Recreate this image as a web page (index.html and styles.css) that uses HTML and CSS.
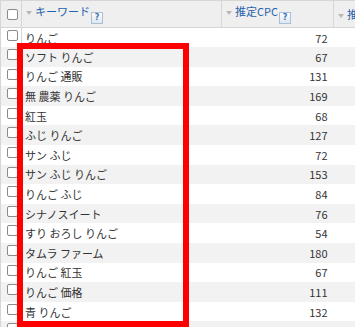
FILE: index.html
```html
<!DOCTYPE html>
<html lang="ja">
<head>
<meta charset="utf-8">
<link rel="stylesheet" href="styles.css">
</head>
<body>
<div class="frame">
  <table class="grid">
    <colgroup>
      <col class="c-chk"><col class="c-kw"><col class="c-cpc"><col class="c-next">
    </colgroup>
    <thead>
      <tr>
        <th class="chk"><span class="box"></span></th>
        <th><span class="tri"></span><span class="hd">キーワード</span><span class="help">?</span></th>
        <th><span class="tri"></span><span class="hd">推定CPC</span><span class="help">?</span></th>
        <th><span class="tri"></span><span class="hd">推定クリック数</span></th>
      </tr>
    </thead>
    <tbody>
      <tr><td class="chk"><span class="box"></span></td><td class="kw">りんご</td><td class="num">72</td><td></td></tr>
      <tr><td class="chk"><span class="box"></span></td><td class="kw">ソフト りんご</td><td class="num">67</td><td></td></tr>
      <tr><td class="chk"><span class="box"></span></td><td class="kw">りんご 通販</td><td class="num">131</td><td></td></tr>
      <tr><td class="chk"><span class="box"></span></td><td class="kw">無 農薬 りんご</td><td class="num">169</td><td></td></tr>
      <tr><td class="chk"><span class="box"></span></td><td class="kw">紅玉</td><td class="num">68</td><td></td></tr>
      <tr><td class="chk"><span class="box"></span></td><td class="kw">ふじ りんご</td><td class="num">127</td><td></td></tr>
      <tr><td class="chk"><span class="box"></span></td><td class="kw">サン ふじ</td><td class="num">72</td><td></td></tr>
      <tr><td class="chk"><span class="box"></span></td><td class="kw">サン ふじ りんご</td><td class="num">153</td><td></td></tr>
      <tr><td class="chk"><span class="box"></span></td><td class="kw">りんご ふじ</td><td class="num">84</td><td></td></tr>
      <tr><td class="chk"><span class="box"></span></td><td class="kw">シナノスイート</td><td class="num">76</td><td></td></tr>
      <tr><td class="chk"><span class="box"></span></td><td class="kw">すり おろし りんご</td><td class="num">54</td><td></td></tr>
      <tr><td class="chk"><span class="box"></span></td><td class="kw">タムラ ファーム</td><td class="num">180</td><td></td></tr>
      <tr><td class="chk"><span class="box"></span></td><td class="kw">りんご 紅玉</td><td class="num">67</td><td></td></tr>
      <tr><td class="chk"><span class="box"></span></td><td class="kw">りんご 価格</td><td class="num">111</td><td></td></tr>
      <tr><td class="chk"><span class="box"></span></td><td class="kw">青 りんご</td><td class="num">132</td><td></td></tr>
      <tr><td class="chk"><span class="box"></span></td><td class="kw"></td><td class="num"></td><td></td></tr>
    </tbody>
  </table>
  <div class="highlight"></div>
</div>
</body>
</html>
```

FILE: styles.css
```css
html, body {
  margin: 0;
  padding: 0;
  background: #fff;
}

.frame {
  position: relative;
  width: 355px;
  height: 327px;
  overflow: hidden;
  font-family: "Noto Sans CJK JP", "Noto Sans", sans-serif;
  font-size: 11px;
  color: #333;
}

.grid {
  border-collapse: collapse;
  table-layout: fixed;
  width: 433px;
  border-left: 1px solid #d6d6d6;
}

.c-chk { width: 21px; }
.c-kw { width: 200px; }
.c-cpc { width: 112px; }
.c-next { width: 100px; }

.grid thead tr {
  height: 27px;
  background: #efefef;
}

.grid th {
  border-top: 1px solid #d6d6d6;
  border-right: 1px solid #d6d6d6;
  border-bottom: 1px solid #d6d6d6;
  padding: 0 0 0 4px;
  text-align: left;
  font-weight: normal;
  white-space: nowrap;
  line-height: 14px;
  color: #1f62ad;
}

.grid th.chk {
  padding: 0;
}

.grid tbody tr {
  height: 19.6px;
}

.grid tbody tr:nth-child(even) {
  background: #f2f2f2;
}

.grid td {
  padding: 0;
  line-height: 14px;
  white-space: nowrap;
  vertical-align: middle;
}

.grid td.chk {
  border-right: 1px solid #d6d6d6;
  vertical-align: top;
  padding-top: 2px;
}

.grid td.kw {
  padding-left: 3px;
}

.grid td.num {
  text-align: right;
  padding-right: 6px;
}

.box {
  display: block;
  box-sizing: border-box;
  width: 11px;
  height: 11px;
  margin-left: 6px;
  border: 1px solid #8a8a8a;
  border-radius: 2px;
  background: #fff;
}

.tri {
  display: inline-block;
  width: 0;
  height: 0;
  border-left: 3.5px solid transparent;
  border-right: 3.5px solid transparent;
  border-top: 4px solid #b8b8b8;
  margin-right: 3px;
  vertical-align: 2px;
}

.hd {
  vertical-align: 1px;
}

.help {
  display: inline-block;
  box-sizing: border-box;
  width: 12px;
  height: 12px;
  margin-left: 1px;
  border: 1px solid #a9bfd6;
  background: linear-gradient(#ffffff, #dde6f0);
  color: #3d73b3;
  font-family: "DejaVu Sans", sans-serif;
  font-size: 8px;
  font-weight: bold;
  line-height: 10px;
  text-align: center;
  vertical-align: -3px;
}

.highlight {
  position: absolute;
  left: 17px;
  top: 43px;
  width: 172px;
  height: 284px;
  box-sizing: border-box;
  border: 6px solid #ff0000;
}
```
